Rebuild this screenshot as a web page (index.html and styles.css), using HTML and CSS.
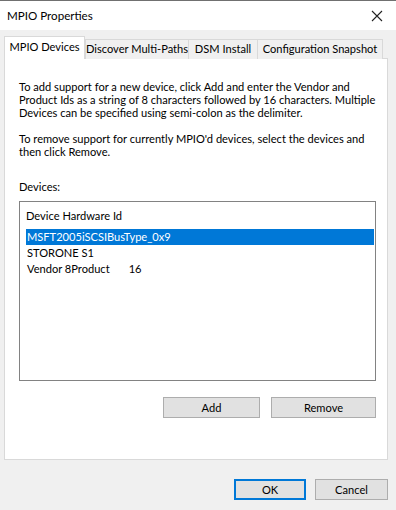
FILE: index.html
```html
<!DOCTYPE html>
<html lang="en">
<head>
  <meta charset="UTF-8" />
  <title>MPIO Properties</title>
  <link rel="stylesheet" href="styles.css">
</head>
<body>
  <div id="window">
    <header class="titlebar">
      <span class="title">MPIO Properties</span>
      <svg class="close" width="12" height="12" viewBox="0 0 12 12">
        <path d="M1 1 L11 11 M11 1 L1 11" stroke="#222" stroke-width="1.1" fill="none" />
      </svg>
    </header>

    <div class="dialog">
      <div class="tabs">
        <div class="tab active">MPIO Devices</div>
        <div class="tab tab-discover">Discover Multi-Paths</div>
        <div class="tab tab-dsm">DSM Install</div>
        <div class="tab tab-config">Configuration Snapshot</div>
      </div>

      <div class="panel">
        <p>To add support for a new device, click Add and enter the Vendor and<br>Product Ids as a string of 8 characters followed by 16 characters. Multiple<br>Devices can be specified using semi-colon as the delimiter.</p>
        <p>To remove support for currently MPIO'd devices, select the devices and<br>then click Remove.</p>
        <p class="label">Devices:</p>

        <div class="listbox">
          <div class="list-head">Device Hardware Id</div>
          <div class="row selected">MSFT2005iSCSIBusType_0x9</div>
          <div class="row">STORONE S1</div>
          <div class="row">Vendor 8Product<span class="gap"></span>16</div>
        </div>

        <div class="panel-buttons">
          <button class="btn btn-add">Add</button>
          <button class="btn btn-remove">Remove</button>
        </div>
      </div>

      <div class="footer">
        <button class="btn btn-ok">OK</button>
        <button class="btn btn-cancel">Cancel</button>
      </div>
    </div>
  </div>
</body>
</html>
```

FILE: styles.css
```css
/* Base */
* {
  box-sizing: border-box;
  margin: 0;
  padding: 0;
}
html, body {
  width: 396px;
  height: 510px;
  overflow: hidden;
  background: #f0f0f0;
  font-family: Lato, "Liberation Sans", sans-serif;
  font-size: 11.1px;
  color: #000;
}

/* Title bar */
.titlebar {
  height: 30px;
  background: #fff;
  border-top: 1px solid #707070;
  display: flex;
  align-items: center;
  justify-content: space-between;
  padding: 0 13px 0 7px;
}
.title {
  font-size: 11.6px;
  color: #000;
}

/* Dialog body */
.dialog {
  padding: 6px 8px 0 4px;
}

/* Tabs */
.tabs {
  display: flex;
  align-items: flex-end;
  height: 23px;
  position: relative;
  z-index: 1;
}
.tab {
  height: 20px;
  line-height: 18px;
  text-align: center;
  white-space: nowrap;
  background: #f0f0f0;
  border: 1px solid #d9d9d9;
  border-bottom: none;
  margin-left: -1px;
}
.tab.active {
  height: 23px;
  width: 81px;
  background: #fff;
  line-height: 20px;
  margin-left: 0;
  margin-right: 1px;
}
.tab-discover {
  width: 104px;
}
.tab-dsm {
  width: 70px;
}
.tab-config {
  width: 126px;
}

/* Panel */
.panel {
  background: #fff;
  border: 1px solid #d9d9d9;
  margin-top: -1px;
  height: 402px;
  padding: 21px 11px 0 14px;
}
.panel p {
  line-height: 13px;
  margin-bottom: 13px;
  white-space: nowrap;
}
.panel p.label {
  margin-top: 22px;
  margin-bottom: 8px;
}

/* List */
.listbox {
  border: 1px solid #828282;
  height: 180px;
  padding: 6px 1px 0 6px;
}
.list-head {
  height: 21px;
  line-height: 16px;
}
.row {
  height: 16px;
  line-height: 16px;
  padding-left: 1px;
}
.row.selected {
  background: #0078d7;
  color: #fff;
}
.gap {
  display: inline-block;
  width: 19px;
}

/* Buttons */
.btn {
  font-family: inherit;
  font-size: 11.1px;
  background: #e1e1e1;
  border: 1px solid #adadad;
  color: #000;
  height: 21px;
}
.panel-buttons {
  display: flex;
  justify-content: flex-end;
  gap: 11px;
  margin-top: 16px;
}
.btn-add {
  width: 97px;
}
.btn-remove {
  width: 105px;
}
.footer {
  display: flex;
  justify-content: flex-end;
  gap: 9px;
  margin-top: 19px;
}
.btn-ok {
  width: 72px;
  border: 2px solid #0078d7;
}
.btn-cancel {
  width: 73px;
}
```
